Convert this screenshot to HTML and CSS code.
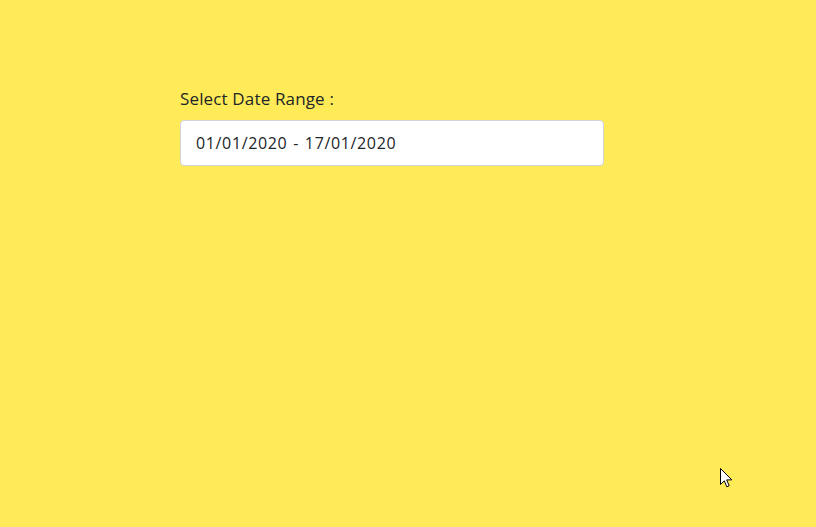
FILE: index.html
```html
<!DOCTYPE html>
<html>
<head>
<meta charset="utf-8">
<link rel="stylesheet" href="styles.css">
</head>
<body>
<div class="page">
  <div class="field">
    <label class="label" for="range">Select Date Range :</label>
    <input class="input" id="range" type="text" value="01/01/2020 - 17/01/2020">
  </div>
</div>
<svg class="cursor" width="13" height="21" viewBox="0 0 13 21"><path d="M0.5 0.5 L0.5 16.5 L4.3 12.8 L6.8 18.8 L9.2 17.8 L6.7 11.9 L11.8 11.9 Z" fill="#fff" stroke="#000" stroke-width="1" stroke-linejoin="miter"/></svg>
</body>
</html>
```
FILE: styles.css
```css
html, body {
  margin: 0;
  height: 100%;
  background: #ffeb57;
}
body {
  font-family: "Open Sans", "Noto Sans", sans-serif;
  color: #212529;
  position: relative;
  overflow: hidden;
}
.page {
  padding: 86px 0 0 180px;
}
.field {
  width: 424px;
  display: flex;
  flex-direction: column;
  gap: 8px;
}
.label {
  font-size: 17px;
  line-height: 26px;
  letter-spacing: 0.15px;
}
.input {
  box-sizing: border-box;
  height: 46px;
  width: 100%;
  padding: 0 15px;
  border: 1px solid #ced4da;
  border-radius: 4px;
  background: #fff;
  font-family: "Open Sans", "Noto Sans", sans-serif;
  font-size: 16px;
  letter-spacing: 0.65px;
  word-spacing: 1px;
  color: #212529;
  outline: none;
}
.cursor {
  position: absolute;
  left: 720px;
  top: 468px;
}
```
